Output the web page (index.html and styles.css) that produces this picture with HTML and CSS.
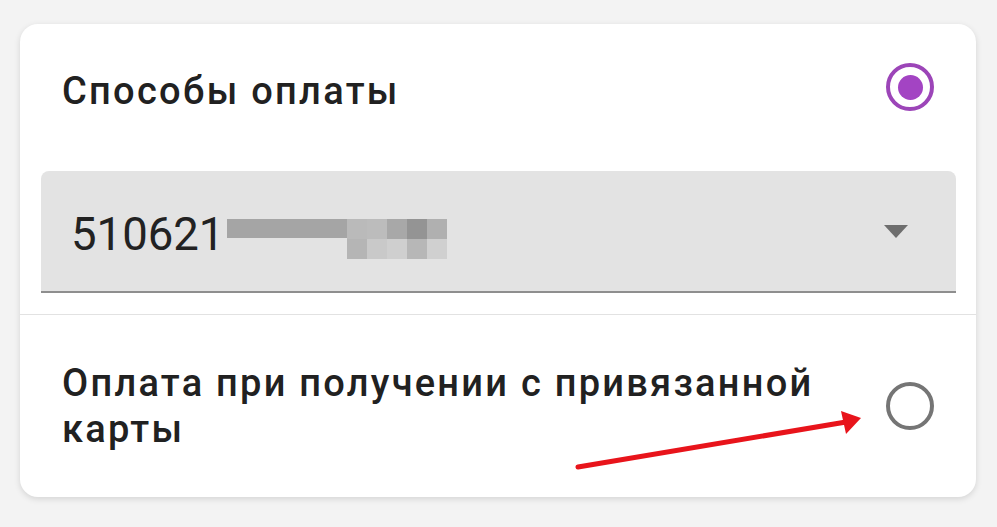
FILE: index.html
```html
<!DOCTYPE html>
<html lang="ru">
<head>
<meta charset="utf-8">
<link rel="stylesheet" href="styles.css">
</head>
<body>
<div class="card">
  <div class="header">
    <div class="title">Способы оплаты</div>
    <span class="radio checked"><span class="dot"></span></span>
  </div>
  <div class="field">
    <div class="value">
      <span class="digits">510621</span>
      <span class="blur">
        <span class="bar"></span>
        <span class="pix">
          <span class="px" style="background:#bababa"></span>
          <span class="px" style="background:#bcbcbc"></span>
          <span class="px" style="background:#a8a8a8"></span>
          <span class="px" style="background:#949494"></span>
          <span class="px" style="background:#b0b0b0"></span>
          <span class="px" style="background:#b5b5b5"></span>
          <span class="px" style="background:#c9c9c9"></span>
          <span class="px" style="background:#cfcfcf"></span>
          <span class="px" style="background:#b7b7b7"></span>
          <span class="px" style="background:#d0d0d0"></span>
        </span>
      </span>
    </div>
    <span class="caret"></span>
  </div>
  <div class="divider"></div>
  <div class="option">
    <div class="label">Оплата при получении с привязанной карты</div>
    <span class="radio"></span>
  </div>
  <svg class="annot" viewBox="0 0 956 473" width="956" height="473">
    <line x1="558" y1="443" x2="832" y2="397" stroke="#e8141b" stroke-width="5" stroke-linecap="round"/>
    <polygon points="841,394 821,387 826,410" fill="#e8141b"/>
  </svg>
</div>
</body>
</html>
```
FILE: styles.css
```css
html, body {
  margin: 0;
  padding: 0;
  background: #f3f3f3;
  font-family: Roboto, "Noto Sans", sans-serif;
  color: #212121;
}
body {
  padding: 24px 21px 30px 20px;
}
.card {
  position: relative;
  width: 956px;
  height: 473px;
  background: #fff;
  border-radius: 18px;
  box-shadow: 0 2px 6px rgba(0,0,0,0.13);
  display: flex;
  flex-direction: column;
  overflow: hidden;
}
.header {
  height: 126px;
  display: flex;
  align-items: center;
  justify-content: space-between;
  padding: 0 42px 0 42px;
  box-sizing: border-box;
  flex: none;
}
.title {
  font-size: 38px;
  font-weight: 500;
  letter-spacing: 2.3px;
  margin-top: 8px;
}
.radio {
  width: 48px;
  height: 48px;
  box-sizing: border-box;
  border: 4.5px solid #757575;
  border-radius: 50%;
  display: flex;
  align-items: center;
  justify-content: center;
  flex: none;
}
.radio.checked {
  border-color: #9c45b8;
}
.dot {
  width: 25px;
  height: 25px;
  border-radius: 50%;
  background: #a344c3;
}
.field {
  margin: 21px 20px 0 21px;
  height: 122px;
  flex: none;
  box-sizing: border-box;
  background: #e3e3e3;
  border-radius: 8px 8px 0 0;
  border-bottom: 2.5px solid #8e8e8e;
  display: flex;
  align-items: center;
  justify-content: space-between;
  padding: 0 48px 0 30px;
}
.value {
  display: flex;
  align-items: center;
  margin-top: 7px;
}
.digits {
  font-size: 45.5px;
  font-weight: 400;
  color: #222;
}
.blur {
  display: flex;
  align-items: flex-start;
  margin-left: 3px;
  height: 40px;
  margin-top: 9px;
}
.bar {
  width: 120px;
  height: 19px;
  background: #a5a5a5;
}
.pix {
  display: grid;
  grid-template-columns: repeat(5, 20px);
  grid-template-rows: 20px 20px;
}
.caret {
  width: 0;
  height: 0;
  border-left: 12.5px solid transparent;
  border-right: 12.5px solid transparent;
  border-top: 13px solid #6e6e6e;
  margin-top: 1px;
}
.divider {
  height: 1px;
  background: #e2e2e2;
  margin-top: 21px;
  flex: none;
}
.option {
  flex: 1;
  display: flex;
  align-items: center;
  justify-content: space-between;
  padding: 0 42px 0 42px;
}
.label {
  font-size: 38px;
  font-weight: 500;
  letter-spacing: 2.25px;
  line-height: 46px;
  width: 800px;
  margin-top: -1px;
}
.annot {
  position: absolute;
  left: 0;
  top: 0;
  pointer-events: none;
}
```
